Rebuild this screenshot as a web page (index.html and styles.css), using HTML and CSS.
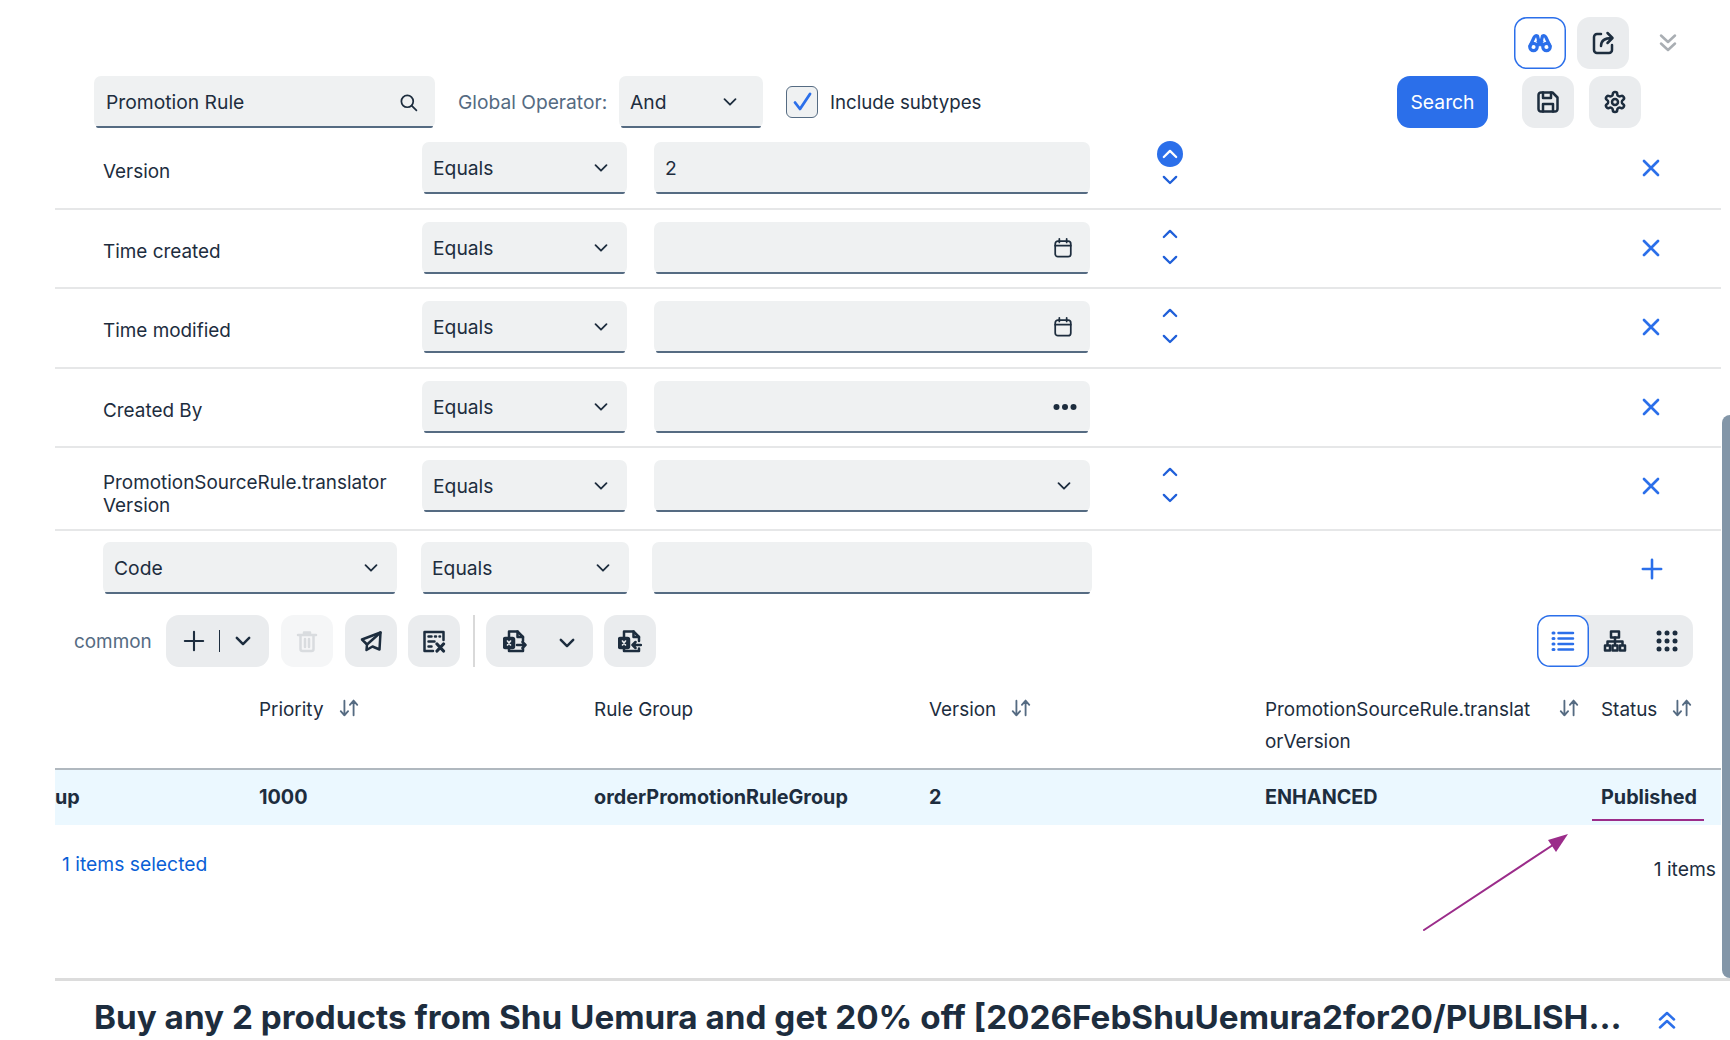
FILE: index.html
```html
<!DOCTYPE html>
<html lang="en">
<head>
<meta charset="utf-8">
<title>Promotion Rule</title>
<link rel="stylesheet" href="styles.css">
</head>
<body>
<svg class="defs" aria-hidden="true">
  <symbol id="down" viewBox="0 0 16 16"><path d="M2.5 5.2 8 10.7l5.5-5.5"/></symbol>
  <symbol id="up" viewBox="0 0 16 16"><path d="M2.5 10.7 8 5.2l5.5 5.5"/></symbol>
  <symbol id="cal" viewBox="0 0 24 24"><rect x="3.5" y="4.5" width="17" height="17" rx="3"/><path d="M3.5 9.5h17M8 2v4M16 2v4"/></symbol>
  <symbol id="close" viewBox="0 0 24 24"><path d="M5 5l14 14M19 5 5 19"/></symbol>
  <symbol id="sort" viewBox="0 0 24 24"><path d="M7 4v16M3 15.5 7 20l4-4.500M17 20V4M13 8.500 17 4l4 4.500"/></symbol>
</svg>
<div class="page">
  <header class="top-actions">
    <button class="icon-btn active"><svg class="ic ic-bold" viewBox="0 0 24 24"><circle cx="5.500" cy="16" r="3.700"/><circle cx="18.500" cy="16" r="3.700"/><path d="M2 15 6 6.500Q7 4 9.500 5L10.500 9v5M22 15 18 6.500Q17 4 14.500 5L13.500 9v5M10 10.500h4"/></svg></button>
    <button class="icon-btn"><svg class="ic" viewBox="0 0 24 24"><path d="M10 3H6a3 3 0 0 0-3 3v13a3 3 0 0 0 3 3h12a3 3 0 0 0 3-3v-5"/><path d="M10 15c0-5 3-8 11-8M16.500 2l5 5-5 5"/></svg></button>
    <span class="collapse"><svg class="ic-dbl" viewBox="0 0 20 20"><path d="M3 2.500l7 6.500 7-6.500M3 10.500l7 6.500 7-6.500"/></svg></span>
  </header>

  <section class="filter-bar">
    <div class="field field-type"><span>Promotion Rule</span><svg class="ic-s" viewBox="0 0 24 24"><circle cx="10.500" cy="10.500" r="7.500"/><path d="m16 16 6 6"/></svg></div>
    <label class="op-label">Global Operator:</label>
    <div class="field field-op"><span>And</span><svg class="chev"><use href="#down"/></svg></div>
    <span class="check"><svg viewBox="0 0 24 24"><path d="M5 12.500 10 19 20 4"/></svg></span>
    <span class="check-label">Include subtypes</span>
    <button class="search-btn">Search</button>
    <button class="icon-btn"><svg class="ic" viewBox="0 0 24 24"><path d="M5 2.500h11.500l5 5V19a2.500 2.500 0 0 1-2.500 2.500H5A2.500 2.500 0 0 1 2.500 19V5A2.500 2.500 0 0 1 5 2.500z"/><path d="M7 21.500V14h10v7.500M7 2.500V8h8V2.500"/></svg></button>
    <button class="icon-btn"><svg class="ic" viewBox="0 0 24 24"><path d="M12.220 2h-.44a2 2 0 0 0-2 2v.18a2 2 0 0 1-1 1.730l-.43.250a2 2 0 0 1-2 0l-.15-.08a2 2 0 0 0-2.730.730l-.22.380a2 2 0 0 0 .730 2.730l.15.100a2 2 0 0 1 1 1.720v.51a2 2 0 0 1-1 1.740l-.15.090a2 2 0 0 0-.730 2.730l.22.380a2 2 0 0 0 2.730.730l.15-.08a2 2 0 0 1 2 0l.43.250a2 2 0 0 1 1 1.730V20a2 2 0 0 0 2 2h.44a2 2 0 0 0 2-2v-.18a2 2 0 0 1 1-1.730l.43-.25a2 2 0 0 1 2 0l.15.08a2 2 0 0 0 2.730-.73l.22-.39a2 2 0 0 0-.73-2.730l-.15-.08a2 2 0 0 1-1-1.740v-.5a2 2 0 0 1 1-1.740l.15-.09a2 2 0 0 0 .73-2.730l-.22-.38a2 2 0 0 0-2.730-.73l-.15.08a2 2 0 0 1-2 0l-.43-.25a2 2 0 0 1-1-1.730V4a2 2 0 0 0-2-2z"/><circle cx="12" cy="12" r="3"/></svg></button>
  </section>

  <section class="criteria">
    <div class="crit">
      <div class="crit-label">Version</div>
      <div class="field"><span>Equals</span><svg class="chev"><use href="#down"/></svg></div>
      <div class="field"><span>2</span></div>
      <div class="updown"><span class="ud on"><svg class="chev-b"><use href="#up"/></svg></span><span class="ud"><svg class="chev-b"><use href="#down"/></svg></span></div>
      <div class="act"><svg class="x"><use href="#close"/></svg></div>
    </div>
    <div class="crit">
      <div class="crit-label">Time created</div>
      <div class="field"><span>Equals</span><svg class="chev"><use href="#down"/></svg></div>
      <div class="field"><span></span><svg class="cal"><use href="#cal"/></svg></div>
      <div class="updown"><span class="ud"><svg class="chev-b"><use href="#up"/></svg></span><span class="ud"><svg class="chev-b"><use href="#down"/></svg></span></div>
      <div class="act"><svg class="x"><use href="#close"/></svg></div>
    </div>
    <div class="crit">
      <div class="crit-label">Time modified</div>
      <div class="field"><span>Equals</span><svg class="chev"><use href="#down"/></svg></div>
      <div class="field"><span></span><svg class="cal"><use href="#cal"/></svg></div>
      <div class="updown"><span class="ud"><svg class="chev-b"><use href="#up"/></svg></span><span class="ud"><svg class="chev-b"><use href="#down"/></svg></span></div>
      <div class="act"><svg class="x"><use href="#close"/></svg></div>
    </div>
    <div class="crit">
      <div class="crit-label">Created By</div>
      <div class="field"><span>Equals</span><svg class="chev"><use href="#down"/></svg></div>
      <div class="field"><span></span><svg class="dots" viewBox="0 0 24 6"><circle cx="3.500" cy="3" r="3"/><circle cx="12" cy="3" r="3"/><circle cx="20.500" cy="3" r="3"/></svg></div>
      <div class="updown"></div>
      <div class="act"><svg class="x"><use href="#close"/></svg></div>
    </div>
    <div class="crit crit-tall">
      <div class="crit-label">PromotionSourceRule.translator<br>Version</div>
      <div class="field"><span>Equals</span><svg class="chev"><use href="#down"/></svg></div>
      <div class="field"><span></span><svg class="chev"><use href="#down"/></svg></div>
      <div class="updown"><span class="ud"><svg class="chev-b"><use href="#up"/></svg></span><span class="ud"><svg class="chev-b"><use href="#down"/></svg></span></div>
      <div class="act"><svg class="x"><use href="#close"/></svg></div>
    </div>
    <div class="crit-add">
      <div class="field field-name"><span>Code</span><svg class="chev"><use href="#down"/></svg></div>
      <div class="field field-eq"><span>Equals</span><svg class="chev"><use href="#down"/></svg></div>
      <div class="field field-val"></div>
      <div class="act act-add"><svg class="plus" viewBox="0 0 24 24"><path d="M12 2v20M2 12h20"/></svg></div>
    </div>
  </section>

  <section class="toolbar">
    <span class="tb-label">common</span>
    <div class="tb-btn tb-add"><svg class="ic-p" viewBox="0 0 24 24"><path d="M12 2v20M2 12h20"/></svg><i class="tb-div"></i><svg class="chev chev-k"><use href="#down"/></svg></div>
    <div class="tb-btn tb-off"><svg class="ic" viewBox="0 0 24 24"><path d="M3 6h18M9 6V3.500h6V6M5.500 6v14a2 2 0 0 0 2 2h9a2 2 0 0 0 2-2V6M10 10v8M14 10v8"/></svg></div>
    <div class="tb-btn"><svg class="ic" viewBox="0 0 24 24"><path d="M21.500 3.500 3 10.500l5 5-.5 5.500 6-3.500 7 3z"/><path d="M21.500 3.500 8 15.500"/></svg></div>
    <div class="tb-btn"><svg class="ic" viewBox="0 0 24 24"><path d="M21.500 11V3h-19v19H11"/><path d="M6.500 7.500h3M13 7.500h1M17.500 7.500h.5M6.500 12.500h6M6.500 17.500h3"/><path class="x-bold" d="M15 15l6.500 7M21.500 15 15 22"/></svg></div>
    <i class="tb-sep"></i>
    <div class="tb-btn tb-export"><svg class="ic" viewBox="0 0 24 24"><path d="M6 8V2.500h8.500l5.500 5.500v4M20 19.500V22H6v-3"/><path d="M14.500 2.500V8H20"/><rect class="solid" x="1" y="9" width="10" height="10" rx="1.500"/><path class="inv" d="M4.500 12l3 4M7.500 12l-3 4"/><path d="M14 16h8.500M19.500 13l3 3-3 3"/></svg><svg class="chev chev-k"><use href="#down"/></svg></div>
    <div class="tb-btn"><svg class="ic" viewBox="0 0 24 24"><path d="M6 8V2.500h9.500l5.500 5.500v4M21 19.500V22H6v-3"/><path d="M15.500 2.500V8H21"/><rect class="solid" x="1" y="9" width="10" height="10" rx="1.500"/><path class="inv" d="M4.500 12l3 4M7.500 12l-3 4"/><path d="M23 16h-8.500M17.500 13l-3 3 3 3"/></svg></div>
    <div class="view-switch">
      <span class="view active"><svg class="ic" viewBox="0 0 24 24"><path d="M7.500 4H22M7.500 9.500H22M7.500 15H22M7.500 20.500H22"/><path class="dotline" d="M2 4h1M2 9.500h1M2 15h1M2 20.500h1"/></svg></span>
      <span class="view"><svg class="ic" viewBox="0 0 24 24"><rect x="8" y="2.500" width="8" height="6"/><path d="M12 8.500v4M4.500 16v-3.500h15V16M12 12.500V16"/><rect x="2" y="16.500" width="5" height="5"/><rect x="9.500" y="16.500" width="5" height="5"/><rect x="17" y="16.500" width="5" height="5"/></svg></span>
      <span class="view"><svg class="ic ic-fill" viewBox="0 0 24 24"><circle cx="4" cy="4" r="2.500"/><circle cx="12" cy="4" r="2.500"/><circle cx="20" cy="4" r="2.500"/><circle cx="4" cy="12" r="2.500"/><circle cx="12" cy="12" r="2.500"/><circle cx="20" cy="12" r="2.500"/><circle cx="4" cy="20" r="2.500"/><circle cx="12" cy="20" r="2.500"/><circle cx="20" cy="20" r="2.500"/></svg></span>
    </div>
  </section>

  <section class="table">
    <div class="t-row t-head">
      <div class="cell"></div>
      <div class="cell"><span>Priority</span><svg class="sort"><use href="#sort"/></svg></div>
      <div class="cell"><span>Rule Group</span></div>
      <div class="cell"><span>Version</span><svg class="sort"><use href="#sort"/></svg></div>
      <div class="cell"><span class="wrap">PromotionSourceRule.translatorVersion</span><svg class="sort"><use href="#sort"/></svg></div>
      <div class="cell"><span>Status</span><svg class="sort"><use href="#sort"/></svg></div>
    </div>
    <div class="t-row t-data">
      <div class="cell-d">up</div>
      <div class="cell-d">1000</div>
      <div class="cell-d">orderPromotionRuleGroup</div>
      <div class="cell-d">2</div>
      <div class="cell-d">ENHANCED</div>
      <div class="cell-d cell-status">Published</div>
    </div>
    <div class="t-foot">
      <a class="selected">1 items selected</a>
      <span class="count">1 items</span>
    </div>
  </section>

  <footer class="title-bar">
    <h1>Buy any 2 products from Shu Uemura and get 20% off [2026FebShuUemura2for20/PUBLISH...</h1>
    <svg class="ic-dbl-b" viewBox="0 0 20 20"><path d="M3 9.500l7-6.500 7 6.500M3 17.500l7-6.500 7 6.500"/></svg>
  </footer>

  <svg class="arrow" viewBox="0 0 160 110"><path d="M8 100 146 9"/><path class="arrow-head" d="M152 4 132 10l8 12z"/></svg>
  <div class="scroll-thumb"></div>
</div>
</body>
</html>
```

FILE: styles.css
```css
* { box-sizing: border-box; }
html, body { margin: 0; height: 100%; }
body { background: #fff; color: #1d2d3e; font-family: Inter, "Noto Sans", "Liberation Sans", sans-serif; font-size: 19.3px; overflow: hidden; }
.defs { display: none; }
.page { position: relative; width: 1730px; height: 1040px; padding-left: 55px; overflow: hidden; }

svg { fill: none; stroke: currentColor; stroke-width: 2.500; stroke-linecap: round; stroke-linejoin: round; display: block; flex: none; }
.ic { width: 24px; height: 24px; }
.ic-bold { stroke-width: 3.200; }
.ic-fill { fill: currentColor; stroke: none; }
.ic-s { width: 19px; height: 19px; stroke-width: 2.200; }
.solid { fill: currentColor; }
.inv { stroke: #eaecee; stroke-width: 1.600; }
.x-bold { stroke-width: 3.200; }

button { font: inherit; border: 0; cursor: pointer; padding: 0; }
.icon-btn { width: 52px; height: 52px; border-radius: 13px; background: #eaecee; color: #1d2d3e; display: flex; align-items: center; justify-content: center; }
.icon-btn.active { background: #fff; color: #2b6fea; box-shadow: inset 0 0 0 1.500px #2b6fea; }

.top-actions { height: 76px; padding: 17px 36px 7px 0; display: flex; justify-content: flex-end; gap: 11px; width: 1675px; }
.collapse { width: 52px; display: flex; align-items: center; justify-content: center; color: #a9aeb3; margin-left: 2px; }
.ic-dbl { width: 20px; height: 20px; stroke-width: 2.500; }

.filter-bar { display: flex; align-items: center; padding-left: 39px; height: 52px; }
.field { height: 52px; background: #eff1f2; border-radius: 7px; position: relative; display: flex; align-items: center; justify-content: space-between; padding: 0 18px 0 11px; }
.field::after { content: ""; position: absolute; left: 2px; right: 2px; bottom: 0; height: 2px; background: #556b82; border-radius: 0 0 2px 2px; }
.field-type { width: 341px; padding-left: 12px; padding-right: 17px; }
.op-label { color: #556b82; margin-left: 23px; width: 161px; white-space: nowrap; font-size: 19.200px; }
.field-op { width: 144px; padding-right: 25px; }
.chev { width: 16px; height: 16px; stroke-width: 1.800; }
.check { width: 32px; height: 32px; margin-left: 23px; background: #eff1f2; border: 1.500px solid #556b82; border-radius: 6px; display: flex; align-items: center; justify-content: center; color: #2b6fea; }
.check svg { width: 24px; height: 24px; stroke-width: 2.800; }
.check-label { margin-left: 12px; width: 567px; font-size: 18.700px; }
.search-btn { width: 91px; height: 52px; background: #2b6fea; color: #fff; border-radius: 13px; margin-right: 34px; }
.filter-bar .icon-btn + .icon-btn { margin-left: 15px; }

.criteria { margin-top: 2px; }
.crit { display: grid; grid-template-columns: 319px 205px 27px 436px 160px 1fr; padding: 12px 70px 13.500px 48px; border-bottom: 2px solid #e6e7e8; width: 1666px; }
.crit > .field:nth-child(3) { grid-column: 4; }
.crit-label { padding-top: 18px; line-height: 23px; font-size: 18.900px; }
.crit-tall { padding-bottom: 11.500px; }
.crit-tall .crit-label { padding-top: 11px; }
.cal { width: 22px; height: 22px; stroke-width: 1.900; margin-right: -2px; }
.dots { width: 24px; height: 6px; fill: currentColor; stroke: none; margin-right: -5px; }
.updown { display: flex; flex-direction: column; align-items: center; margin-top: -1px; }
.ud { width: 26px; height: 26px; display: flex; align-items: center; justify-content: center; color: #1f5fd9; border-radius: 50%; }
.ud.on { background: #2b6fea; color: #fff; }
.chev-b { width: 18px; height: 18px; stroke-width: 2; }
.act { display: flex; justify-content: flex-end; align-items: center; align-self: start; height: 52px; color: #2b6fea; }
.x { width: 24px; height: 24px; stroke-width: 2.700; margin-right: -12px; }

.crit-add { display: flex; padding: 11px 70px 0 48px; width: 1666px; }
.field-name { width: 294px; }
.field-eq { width: 208px; margin-left: 24px; }
.field-val { width: 440px; margin-left: 23px; }
.act-add { flex: 1; padding-top: 2px; }
.plus { width: 22px; height: 22px; stroke-width: 2.800; margin-right: -12px; }

.toolbar { display: flex; align-items: center; margin-top: 21px; padding-left: 19px; width: 1638px; height: 52px; }
.tb-label { color: #556b82; width: 92px; font-size: 18.900px; padding-top: 2px; }
.tb-btn { height: 52px; width: 52px; background: #eaecee; border-radius: 13px; display: flex; align-items: center; justify-content: center; margin-right: 11.500px; color: #1d2d3e; }
.tb-add { width: 103px; gap: 0; margin-right: 12px; }
.ic-p { width: 22px; height: 22px; stroke-width: 2.300; }
.tb-div { width: 1px; height: 22px; background: #1d2d3e; margin: 0 14px; }
.chev-k { width: 18px; height: 18px; stroke-width: 2.200; }
.tb-off { background: #f5f6f7; color: #d9dcdf; }
.tb-sep { width: 2px; height: 52px; background: #d9d9d9; margin: 0 11px 0 1px; }
.tb-export { width: 107px; gap: 31px; }
.tb-export .chev-k { margin-top: 4px; }
.view-switch { margin-left: auto; display: flex; width: 156px; height: 52px; background: #eaecee; border-radius: 13px; color: #1d2d3e; }
.view { width: 52px; height: 52px; display: flex; align-items: center; justify-content: center; border-radius: 13px; }
.view.active { background: #fff; color: #2b6fea; box-shadow: inset 0 0 0 1.500px #2b6fea; }
.dotline { stroke-width: 3; }

.t-row { display: grid; grid-template-columns: 204px 335px 335px 336px 336px 120px; width: 1666px; }
.t-head { height: 103px; padding-top: 27px; border-bottom: 2px solid #b0b8bf; line-height: 32px; font-size: 18.900px; }
.cell { display: flex; gap: 14px; align-items: flex-start; }
.wrap { width: 279px; padding-right: 8px; word-break: break-all; }
.sort { width: 22px; height: 22px; color: #556b82; stroke-width: 2; margin-top: 3px; }
.t-data { height: 55px; background: #ebf8ff; font-weight: 700; font-size: 19.800px; }
.cell-d { display: flex; align-items: center; position: relative; }
.cell-status::after { content: ""; position: absolute; left: -9px; width: 112px; bottom: 4px; height: 2px; background: #9b2c8a; }
.t-foot { height: 156px; border-bottom: 3px solid #dcdcdc; width: 1675px; padding: 27px 6px 0 7px; display: flex; justify-content: space-between; align-items: flex-start; }
.selected { color: #0a5fd6; }
.count { margin-top: 5px; margin-right: 8px; }

.title-bar { display: flex; align-items: center; padding-left: 39px; padding-top: 12px; height: 60px; }
.title-bar h1 { margin: 0; font-size: 33.250px; font-weight: 700; width: 1563px; white-space: nowrap; }
.ic-dbl-b { width: 20px; height: 20px; stroke-width: 2.500; color: #2b6fea; margin-top: 6px; }

.arrow { position: absolute; left: 1416px; top: 830px; width: 160px; height: 110px; color: #9b2c8a; stroke-width: 2; }
.arrow-head { fill: #9b2c8a; stroke: none; }
.scroll-thumb { position: absolute; left: 1722px; top: 415px; width: 8px; height: 563px; background: #8396a8; border-radius: 8px 0 0 8px; }
```
